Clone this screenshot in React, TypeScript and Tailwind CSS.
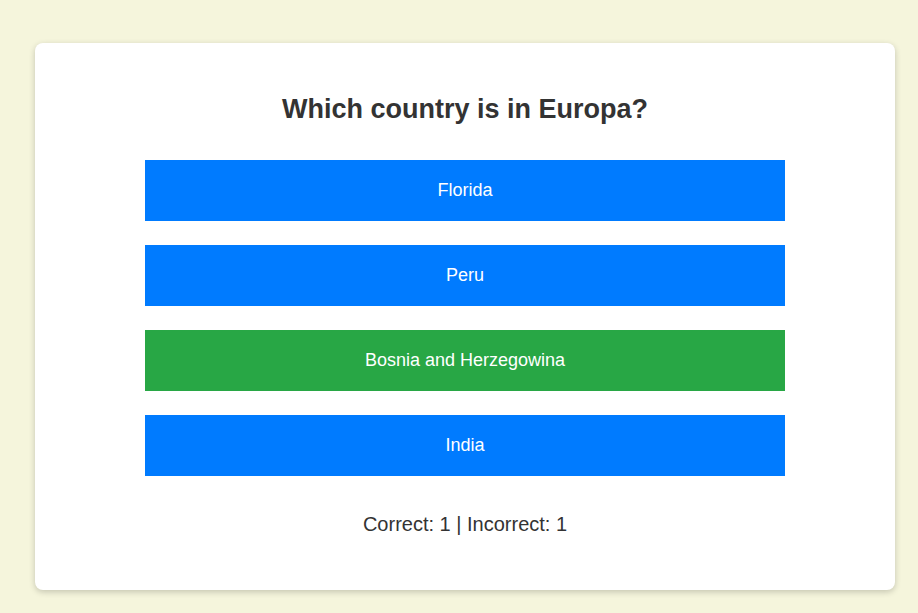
import { useState } from 'react'

const options = ['Florida', 'Peru', 'Bosnia and Herzegowina', 'India']
const answer = 'Bosnia and Herzegowina'

export default function App() {
  const [selected] = useState<string | null>(answer)

  return (
    <div
      className="min-h-[613px] bg-[#f5f5dc] pt-[43px]"
      style={{ fontFamily: '"Liberation Sans", Arial, sans-serif' }}
    >
      <div className="ml-[35px] w-[860px] rounded-[8px] bg-white shadow-[0_2px_6px_rgba(0,0,0,0.2)]">
        <div className="flex flex-col items-center pt-[51px] pb-[55px]">
          {/* Question */}
          <h2 className="text-[27px] leading-[30px] font-bold text-[#333]">Which country is in Europa?</h2>

          {/* Options */}
          <div className="mt-[36px] flex w-[640px] flex-col gap-[24px]">
            {options.map((option) => (
              <button
                key={option}
                className={`flex h-[61px] w-full items-center justify-center text-[18px] text-white ${
                  selected === option ? 'bg-[#28a745]' : 'bg-[#007bff]'
                }`}
              >
                {option}
              </button>
            ))}
          </div>

          {/* Score */}
          <p className="mt-[38px] text-[20px] leading-[21px] text-[#333]">Correct: 1 | Incorrect: 1</p>
        </div>
      </div>
    </div>
  )
}
